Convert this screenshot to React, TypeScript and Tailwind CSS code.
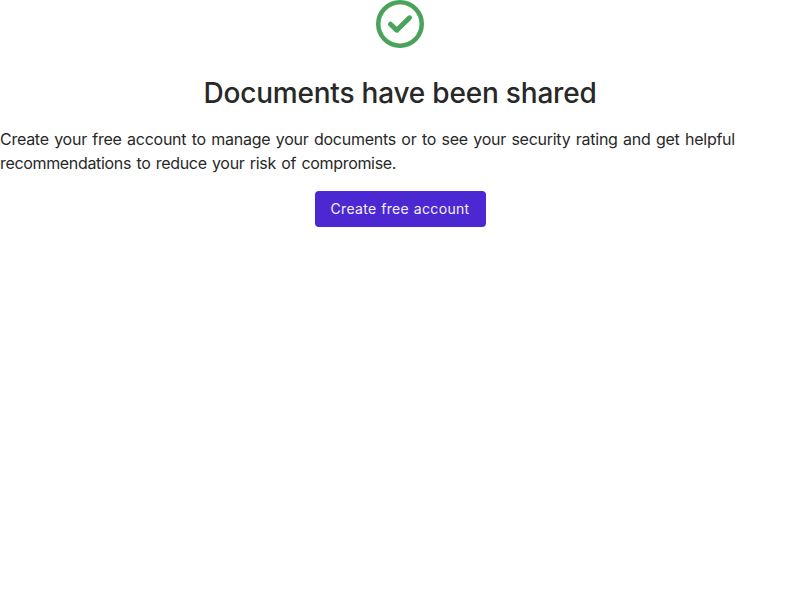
import React from "react";

function CheckCircle() {
  return (
    <svg className="block size-12" viewBox="0 0 48 48" fill="none" aria-hidden="true">
      <circle cx="24" cy="24" r="21.75" stroke="#49a35b" strokeWidth="4.5" />
      <path d="M14.5 24.2L20.8 30.2L33.5 17.8" stroke="#49a35b" strokeWidth="5" strokeLinecap="round" strokeLinejoin="round" />
    </svg>
  );
}

export default function App() {
  return (
    <main className="flex min-h-screen flex-col items-center bg-white font-['Inter',sans-serif] text-[#282828]">
      <CheckCircle />
      <h1 className="mt-6 text-[28px] leading-[42px] font-medium tracking-[-0.2px]">Documents have been shared</h1>
      <p className="mt-[13px] w-full text-base leading-6 font-normal">
        <span className="tracking-[-0.26px] [word-spacing:1.2px]">
          Create your free account to manage your documents or to see your security rating and get helpful{" "}
        </span>
        <span className="tracking-[-0.33px] [word-spacing:1.2px]">
          recommendations to reduce your risk of compromise.
        </span>
      </p>
      <button className="mt-4 h-9 w-[171px] rounded-[4px] bg-[#4b28d2] text-sm font-normal tracking-[0.34px] text-[#f4f1fd] [word-spacing:0.4px]">
        Create free account
      </button>
    </main>
  );
}
